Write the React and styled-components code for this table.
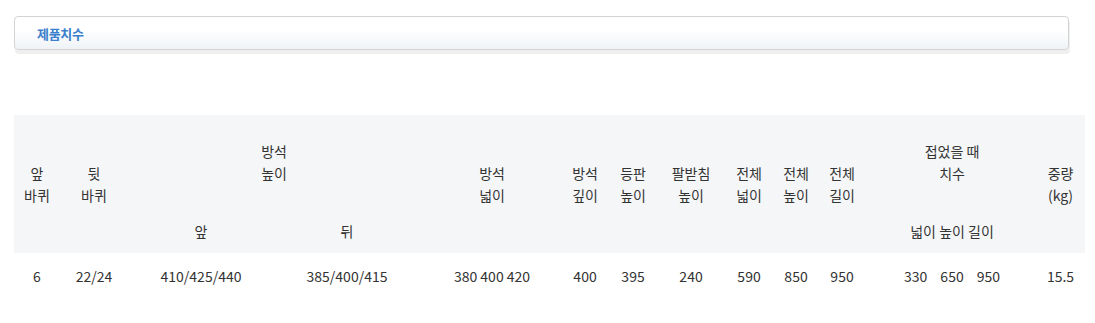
import React from "react";
import styled, { createGlobalStyle } from "styled-components";

const GlobalStyle = createGlobalStyle`
  body {
    margin: 0;
    background: #fff;
    font-family: "Noto Sans CJK KR", "Noto Sans", sans-serif;
  }
`;

const cols = [46, 68, 146, 146, 144, 42, 54, 62, 54, 40, 52, 168, 49];

export default function App() {
  return (
    <Page>
      <GlobalStyle />
      <TitleBar>
        <h3>제품치수</h3>
      </TitleBar>

      <SpecTable>
        <colgroup>
          {cols.map((w, i) => (
            <col key={i} style={{ width: w }} />
          ))}
        </colgroup>
        <thead>
          <HeadRow $h={93}>
            <th rowSpan={2}>앞<br />바퀴</th>
            <th rowSpan={2}>뒷<br />바퀴</th>
            <th colSpan={2} className="top">방석<br />높이</th>
            <th rowSpan={2}>방석<br />넓이</th>
            <th rowSpan={2}>방석<br />깊이</th>
            <th rowSpan={2}>등판<br />높이</th>
            <th rowSpan={2}>팔받침<br />높이</th>
            <th rowSpan={2}>전체<br />넓이</th>
            <th rowSpan={2}>전체<br />높이</th>
            <th rowSpan={2}>전체<br />길이</th>
            <th className="top">접었을 때<br />치수</th>
            <th rowSpan={2}>중량<br />(kg)</th>
          </HeadRow>
          <HeadRow $h={45}>
            <th>앞</th>
            <th>뒤</th>
            <th>넓이 높이 길이</th>
          </HeadRow>
        </thead>
        <tbody>
          <tr>
            <td>6</td>
            <td>22/24</td>
            <td>410/425/440</td>
            <td>385/400/415</td>
            <td>380 400 420</td>
            <td>400</td>
            <td>395</td>
            <td>240</td>
            <td>590</td>
            <td>850</td>
            <td>950</td>
            <td>
              <Folded>
                <span>330</span>
                <span>650</span>
                <span>950</span>
              </Folded>
            </td>
            <td>15.5</td>
          </tr>
        </tbody>
      </SpecTable>
    </Page>
  );
}

const Page = styled.div`
  padding: 16px 10px 20px 14px;
`;

const TitleBar = styled.div`
  width: 1055px;
  height: 34px;
  box-sizing: border-box;
  display: flex;
  align-items: center;
  padding-left: 22px;
  border: 1px solid #d3d3d3;
  border-radius: 4px;
  background: linear-gradient(#ffffff 40%, #eff3f7);
  box-shadow: 1px 4px 0 #efefef;

  h3 {
    margin: 0;
    font-size: 13px;
    font-weight: 700;
    color: #3b80cc;
    letter-spacing: -0.3px;
  }
`;

const SpecTable = styled.table`
  margin-top: 65px;
  width: 1071px;
  table-layout: fixed;
  border-collapse: collapse;
  font-size: 14px;
  line-height: 22px;
  color: #333;

  th {
    font-weight: 400;
    background: #f5f6f8;
    padding: 0;
    text-align: center;
    vertical-align: middle;
    white-space: nowrap;
  }

  td {
    padding: 12px 0;
    text-align: center;
    white-space: nowrap;
  }
`;

const HeadRow = styled.tr`
  height: ${(p) => p.$h}px;
`;

const Folded = styled.div`
  display: flex;
  justify-content: center;
  gap: 13px;
`;
